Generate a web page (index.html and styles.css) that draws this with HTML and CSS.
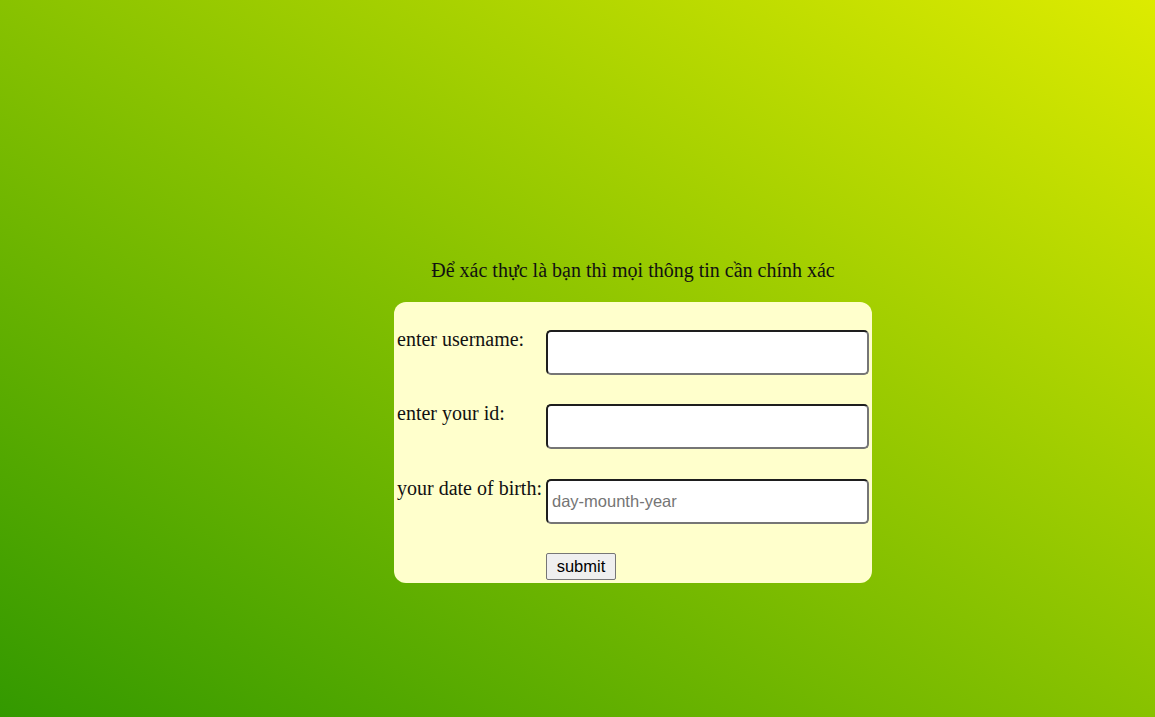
FILE: index.html
```html
<!DOCTYPE html>
<html lang="vi">
<head>
<meta charset="utf-8">
<title>Xác thực</title>
<link rel="stylesheet" href="styles.css">
</head>
<body>
<main class="page">
  <section class="panel">
    <p class="title">Để xác thực là bạn thì mọi thông tin cần chính xác</p>
    <form class="card">
      <label class="label" for="u">enter username:</label>
      <input class="field" id="u" type="text">
      <label class="label" for="i">enter your id:</label>
      <input class="field" id="i" type="text">
      <label class="label" for="d">your date of birth:</label>
      <input class="field" id="d" type="text" placeholder="day-mounth-year">
      <span class="spacer"></span>
      <div class="actions"><button class="submit" type="button">submit</button></div>
    </form>
  </section>
</main>
</body>
</html>
```
FILE: styles.css
```css
html, body {
  margin: 0;
  padding: 0;
  height: 100%;
}
body {
  background: linear-gradient(to top right, #339900, #ddeb00);
  font-family: "Liberation Serif", "Times New Roman", serif;
  color: #111;
}
.page {
  height: 100%;
  display: flex;
  justify-content: center;
  padding-left: 111px;
  box-sizing: border-box;
}
.panel {
  display: flex;
  flex-direction: column;
  align-items: center;
  padding-top: 259px;
}
.title {
  margin: 0 0 21px 0;
  font-size: 20px;
  line-height: 22px;
}
.card {
  width: 478px;
  box-sizing: border-box;
  background: #ffffcc;
  border-radius: 12px;
  padding: 28px 3px 3px 3px;
  display: grid;
  grid-template-columns: 149px 323px;
  row-gap: 29.4px;
}
.label {
  font-size: 20px;
  line-height: 22px;
  align-self: start;
  margin-top: -2px;
}
.field {
  width: 323px;
  height: 45px;
  box-sizing: border-box;
  margin: 0;
  border: 2px solid #767676;
  border-top-color: #1e1e1e;
  border-left-color: #1e1e1e;
  border-radius: 5px;
  background: #fff;
  padding: 0 4px;
  font-family: "Liberation Sans", Arial, sans-serif;
  font-size: 16.5px;
  color: #111;
}
.field::placeholder {
  color: #757575;
}
.actions {
  display: flex;
}
.submit {
  width: 70px;
  height: 27px;
  margin: 0;
  padding: 0;
  border: 1px solid #767676;
  border-radius: 2px;
  background: #efefef;
  font-family: "Liberation Sans", Arial, sans-serif;
  font-size: 16.5px;
  color: #000;
}
```
